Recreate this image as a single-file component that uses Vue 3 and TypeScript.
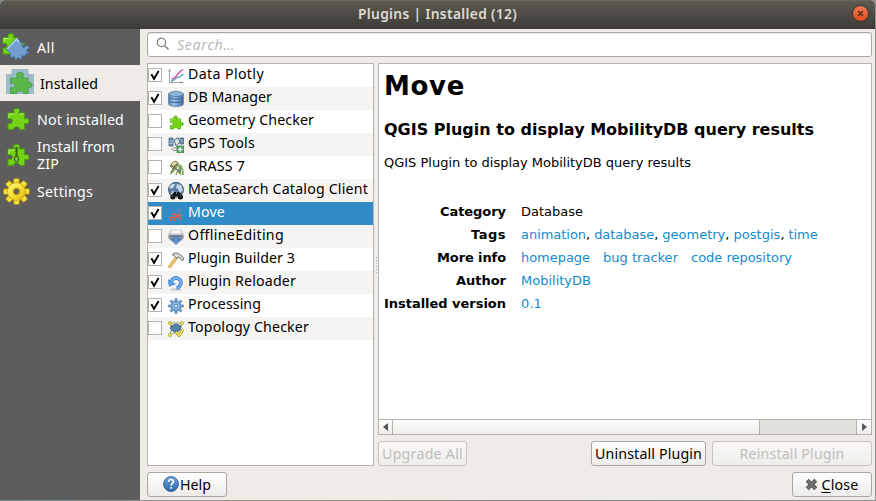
<script setup lang="ts">
interface NavItem { label: string; icon: string; widths: number[]; active?: boolean }
interface Plugin { name: string; icon: string; width: number; checked: boolean; selected?: boolean }
interface Detail { label: string; width: number; values: { text: string; width: number; link?: boolean; after?: string }[] }

const nav: NavItem[] = [
  { label: 'All', icon: 'all', widths: [18] },
  { label: 'Installed', icon: 'installed', widths: [58], active: true },
  { label: 'Not installed', icon: 'puzzle', widths: [87] },
  { label: 'Install from|ZIP', icon: 'zip', widths: [78, 22] },
  { label: 'Settings', icon: 'settings', widths: [56] },
]

const plugins: Plugin[] = [
  { name: 'Data Plotly', icon: 'chart', width: 76, checked: true },
  { name: 'DB Manager', icon: 'db', width: 84, checked: true },
  { name: 'Geometry Checker', icon: 'puzzle', width: 126, checked: false },
  { name: 'GPS Tools', icon: 'gps', width: 67, checked: false },
  { name: 'GRASS 7', icon: 'grass', width: 57, checked: false },
  { name: 'MetaSearch Catalog Client', icon: 'globe', width: 180, checked: true },
  { name: 'Move', icon: 'move', width: 37, checked: true, selected: true },
  { name: 'OfflineEditing', icon: 'offline', width: 96, checked: false },
  { name: 'Plugin Builder 3', icon: 'hammer', width: 107, checked: true },
  { name: 'Plugin Reloader', icon: 'reload', width: 108, checked: true },
  { name: 'Processing', icon: 'gear', width: 73, checked: true },
  { name: 'Topology Checker', icon: 'topology', width: 121, checked: false },
]

const details: Detail[] = [
  { label: 'Category', width: 66, values: [{ text: 'Database', width: 62 }] },
  { label: 'Tags', width: 35, values: [
    { text: 'animation', width: 65, link: true, after: ',' },
    { text: 'database', width: 60, link: true, after: ',' },
    { text: 'geometry', width: 63, link: true, after: ',' },
    { text: 'postgis', width: 47, link: true, after: ',' },
    { text: 'time', width: 29, link: true },
  ] },
  { label: 'More info', width: 69, values: [
    { text: 'homepage', width: 69, link: true },
    { text: 'bug tracker', width: 75, link: true },
    { text: 'code repository', width: 101, link: true },
  ] },
  { label: 'Author', width: 50, values: [{ text: 'MobilityDB', width: 70, link: true }] },
  { label: 'Installed version', width: 122, values: [{ text: '0.1', width: 21, link: true }] },
]

// Tracks a label so that it fills the given width in pixels.
const vFit = {
  mounted(el: HTMLElement, binding: { value: number }) {
    const natural = el.getBoundingClientRect().width
    const count = (el.textContent ?? '').length
    if (count > 1) el.style.letterSpacing = `${(binding.value - natural) / count}px`
  },
}

const gearTeeth = [0, 45, 90, 135, 180, 225, 270, 315]
</script>

<template>
  <svg class="defs" aria-hidden="true">
    <defs>
      <linearGradient id="yellow" x1="0" y1="0" x2="1" y2="1">
        <stop offset="0" stop-color="#fff685" /><stop offset=".5" stop-color="#f7e034" /><stop offset="1" stop-color="#dcb010" />
      </linearGradient>
      <linearGradient id="dbBlue" x1="0" x2="1">
        <stop offset="0" stop-color="#5d88b8" /><stop offset=".35" stop-color="#a5c2e0" /><stop offset="1" stop-color="#3f6fa8" />
      </linearGradient>
      <linearGradient id="helpBlue" x1="0" y1="0" x2="0" y2="1">
        <stop offset="0" stop-color="#6fa3d4" /><stop offset="1" stop-color="#2b69a8" />
      </linearGradient>
      <linearGradient id="steel" x1="0" y1="0" x2="0" y2="1">
        <stop offset="0" stop-color="#f1f1f1" /><stop offset="1" stop-color="#8d8d8d" />
      </linearGradient>
      <path id="piece" d="M2 6H8.4C6.6 3 8 1.4 10.6 1.4S14.5 3 12.8 6H18.6V12C21 10.8 23 12 23 14.2S21 17.4 18.6 16.3V22.4H13.5C14 20.7 12.8 19.8 10.8 19.8S7.2 20.8 7.8 22.4H2V16.4C5 17.2 6.4 16 6.4 14S5 11.4 2 12Z" />
      <symbol id="i-puzzle" viewBox="0 0 24 24">
        <use href="#piece" fill="#74d314" stroke="#48a010" stroke-width="1" />
        <path d="M3 11V7H9.3M14 7H17.6" fill="none" stroke="#b4f56f" stroke-width="1" />
      </symbol>
      <symbol id="i-zip" viewBox="0 0 24 24">
        <use href="#piece" fill="#74d314" stroke="#48a010" stroke-width="1" />
        <path d="M3 11V7H8" fill="none" stroke="#b4f56f" />
        <path d="M10.5 4V14" stroke="#345e18" stroke-width="3" stroke-dasharray="1 1" />
        <path d="M10.5 4V14" stroke="#345e18" />
        <rect x="8.6" y="13.5" width="3.8" height="5" rx="1.8" fill="#8fc65a" stroke="#345e18" stroke-width="1.2" />
      </symbol>
      <symbol id="i-installed" viewBox="0 0 28 26">
        <path d="M5.5 0H22.5V5H28V25H0V5H5.5Z" fill="#9dbbc8" />
        <path d="M5.5 5V25M22.5 5V25" stroke="#8cabb9" />
        <path d="M4.5 9H11.5C9.3 5 11 3.3 14 3.3S18.5 5 16.5 9H22V14C24.8 12.8 26.2 14.3 26.2 16.3S24.5 19 22 18V24.5H17.5C18 22.5 16.2 22 14 22S10.5 23 11 24.5H4.5V18.5C7.5 19.2 9 18 9 16.2S7.5 14 4.5 14.5Z" fill="#5cb74a" stroke="#3b9f40" stroke-width=".8" />
      </symbol>
      <symbol id="i-all" viewBox="0 0 28 28">
        <path d="M1 4.5H6.5C5.2 2 6.5.8 9 .8S12.5 2 11.3 4.5H16V10L8 21H1V14.8C4 15.5 5 14.3 5 12.5S3.5 10 1 10.5Z" fill="#74d314" stroke="#48a010" />
        <path d="M2 9V5.5H7.5" fill="none" stroke="#b9f57a" />
        <path d="M18.5 12C18.5 9.7 20 9 21.5 9.8S23 12 22.3 13" fill="#48a900" />
        <path d="M14.7 5L20.8 11.7C19.2 14.5 21.5 16 24.7 11.9L27.4 14.6 24.3 17.6 26.9 20.3C24 20.5 22.6 21 23 23.5L19.7 22.8 19.4 27 16.5 24.6 13.5 26.6 12.4 23.8 8.2 24.4 8.4 20.6 4.3 16Z" fill="#729fcf" stroke="#3f70b0" stroke-width=".9" stroke-linejoin="round" />
        <path d="M5.3 16L14.6 6.2 17 9" fill="none" stroke="#c1ddf9" stroke-width="1.2" />
      </symbol>
      <symbol id="i-settings" viewBox="0 0 26 26">
        <g stroke="#a88308" stroke-width=".8" fill="url(#yellow)">
          <path v-for="a in gearTeeth" :key="a" d="M9.8 6L10.6 .5H15.4L16.2 6Z" :transform="`rotate(${a} 13 13)`" />
          <circle cx="13" cy="13" r="8.4" />
        </g>
        <circle cx="13" cy="13" r="8.3" fill="url(#yellow)" />
        <circle cx="13" cy="13" r="2.8" fill="#5d5d5d" stroke="#b28b06" />
      </symbol>
      <symbol id="i-chart" viewBox="0 0 16 16">
        <path d="M1.5 1V14.5H16M0 3H3M13 13V16M4 13V16" fill="none" stroke="#858585" stroke-width=".7" />
        <path d="M3.5 11C8 10.5 8 7.5 10 6S11 3 15.5 1.5" fill="none" stroke="#d23aa6" stroke-width="1.3" />
        <path d="M3 13C8 12.5 8 9 11 9S12 7 15.5 6.5" fill="none" stroke="#54abb4" stroke-width="1.3" />
      </symbol>
      <symbol id="i-db" viewBox="0 0 16 16">
        <path d="M.7 3V13C.7 16.2 15.3 16.2 15.3 13V3Z" fill="url(#dbBlue)" stroke="#4472a6" stroke-width=".8" />
        <ellipse cx="8" cy="3" rx="7.3" ry="2.5" fill="#90b3d8" stroke="#4472a6" stroke-width=".8" />
        <path d="M1 6.3C2 8.7 14 8.7 15 6.3M1 9.7C2 12.1 14 12.1 15 9.7" fill="none" stroke="#2d5789" stroke-width=".9" />
      </symbol>
      <symbol id="i-gps" viewBox="0 0 16 16">
        <path d="M1 1H5V9H1ZM12 1H15.5V7H12Z" fill="#6d92b7" stroke="#49657f" stroke-width=".8" />
        <path d="M1 4H5M1 6.5H5M12 4H15" stroke="#b9cee0" stroke-width=".7" />
        <path d="M6 3L10 .7 12 5 8 9Z" fill="#dce5e9" stroke="#526b83" />
        <path d="M3 11.5Q6 15 9 13M5 10Q6 12 9 10.5" fill="none" stroke="#888" />
        <rect x="9" y="9" width="6.7" height="6.7" fill="#62a570" stroke="#3a7b49" stroke-width=".7" />
        <path d="M12.3 10.2V14.6M10.1 12.4H14.5" stroke="#fff" stroke-width="1.3" />
      </symbol>
      <symbol id="i-grass" viewBox="0 0 16 16">
        <path d="M2 14Q8 10 10 3M11 14Q13 8 9 2M15 15Q15 8 12 5M8 15Q10 9 14 7" fill="none" stroke="#8daa68" stroke-width="1.8" />
        <path d="M2 6L5 2 8 1 10 4 7 5 5 9Z" fill="#e7dd9b" stroke="#7b8151" stroke-width=".9" />
        <path d="M3 5L12 12M9 4L3 12" stroke="#5f6654" stroke-width="1.2" />
        <path d="M12 7L13 15" stroke="#4a9947" />
      </symbol>
      <symbol id="i-globe" viewBox="0 0 18 18">
        <circle cx="9" cy="7.8" r="7.5" fill="#587da2" stroke="#31485e" stroke-width=".8" />
        <path d="M2 5L5 2 8 2 7 5 4 7ZM10 2L14 3 16 8 13 11 11 7 9 6ZM5 9L8 10 7 13 4 12Z" fill="#c4d7e7" />
        <path d="M5 17V13L7 10H9V12H10V10H12L15 13V17H11V14H8V17Z" fill="#111" />
        <circle cx="5.8" cy="15" r="2.5" fill="#111" /><circle cx="13.5" cy="15" r="2.5" fill="#111" />
        <path d="M4.8 14.2L6 13.6M12.5 14.2L13.8 13.6" stroke="#aaa" stroke-width=".8" />
      </symbol>
      <symbol id="i-move" viewBox="0 0 16 16">
        <path d="M4.5 9L6.5 7.5 8 9 10 8 12 8M1.5 12L4 11 6.5 12 9 10.5 13 12M5 14.2L8 13.5M11 9L12 14M1 14H3" fill="none" stroke="#f4583a" stroke-width="1.6" stroke-dasharray="2.5 .6" />
        <path d="M3 5L6 4M9 5L11 2M12 7L14 1M7 6L10 6M4 2H5" fill="none" stroke="#5484c0" stroke-width="1.1" stroke-dasharray="1.4 1" />
        <path d="M10 5L13 3M12 10L14 9" stroke="#bc7570" />
      </symbol>
      <symbol id="i-offline" viewBox="0 0 16 16">
        <path d="M2.5 1H13.5L15.5 6V9.5L12 12H4L.5 9.5V6Z" fill="url(#steel)" stroke="#b0b0b0" stroke-width=".6" />
        <ellipse cx="8" cy="3" rx="5" ry="1.4" fill="#fafafa" />
        <path d="M1.2 6.2H14.8V8.6H1.2Z" fill="#737b82" />
        <path d="M5.5 7H10.5V10H13.5L8 15.5 2.5 10H5.5Z" fill="#5b8fcd" stroke="#3e6aa0" stroke-width=".7" />
      </symbol>
      <symbol id="i-hammer" viewBox="0 0 16 16">
        <path d="M8.5 5.5L1.8 14.6" stroke="#c08a35" stroke-width="3" stroke-linecap="round" />
        <path d="M8.5 5.5L1.8 14.6" stroke="#f3c767" stroke-width="2" stroke-linecap="round" />
        <path d="M4 2.5Q7 0 10 1.3L14 4 16 7.3 13.8 8.6 12.5 6.5 10 5 8.5 6 6.5 4.2Z" fill="#d7dddd" stroke="#606769" stroke-width=".9" />
      </symbol>
      <symbol id="i-reload" viewBox="0 0 16 16">
        <ellipse cx="8" cy="14.5" rx="6" ry="1.4" fill="#ccd2d8" />
        <path d="M8.5 12.8A4.9 4.9 0 1 0 3.3 6.5" fill="none" stroke="#3c7dcb" stroke-width="3.8" />
        <path d="M8.5 12.8A4.9 4.9 0 1 0 3.3 6.5" fill="none" stroke="#6eadf2" stroke-width="2.6" />
        <path d="M0 4.6L1.3 11.2 7.4 9Z" fill="#5aa0ee" stroke="#3c7dcb" stroke-width=".7" />
      </symbol>
      <symbol id="i-gear" viewBox="0 0 16 16">
        <g fill="#729fcf" stroke="#4478b3" stroke-width=".5">
          <path v-for="a in gearTeeth" :key="a" d="M6.7 4L7 .3H9L9.3 4Z" :transform="`rotate(${a} 8 8)`" />
          <circle cx="8" cy="8" r="4.9" />
        </g>
        <circle cx="8" cy="8" r="3.2" fill="none" stroke="#a0c1e4" />
        <circle cx="8" cy="8" r="1.6" fill="#fff" stroke="#4478b3" stroke-width=".8" />
      </symbol>
      <symbol id="i-topology" viewBox="0 0 16 16">
        <path d="M2 2L14 2 12 9 2 14 4 7Z" fill="none" stroke="#8c9a5e" />
        <path d="M3 5L8 3 13 5 12 9.5 6 11 2.5 8Z" fill="#5580aa" stroke="#34597f" stroke-width=".8" />
        <g fill="#e9e34d" stroke="#a19d25" stroke-width=".6"><circle cx="2" cy="2" r="1.6" /><circle cx="14" cy="2" r="1.6" /><circle cx="2" cy="14" r="1.6" /></g>
        <path d="M8 11L11 14.5 15.5 8" fill="none" stroke="#8d8b21" stroke-width="2.8" />
        <path d="M8 11L11 14.5 15.5 8" fill="none" stroke="#f1e66b" stroke-width="1.6" />
      </symbol>
    </defs>
  </svg>

  <div class="desktop">
    <div class="window">
      <header class="titlebar">
        <span v-fit="159" class="title">Plugins | Installed (12)</span>
        <button class="window-close" aria-label="Close window">
          <svg viewBox="0 0 15 15"><path d="M5 5L10 10M10 5L5 10" stroke="#4b2a1b" stroke-width="1.4" /></svg>
        </button>
      </header>

      <div class="body">
        <nav class="sidebar">
          <a v-for="item in nav" :key="item.icon" class="nav-item" :class="{ active: item.active }">
            <svg class="nav-icon" :class="item.icon"><use :href="`#i-${item.icon}`" /></svg>
            <span class="nav-label">
              <span v-for="(line, i) in item.label.split('|')" :key="line" class="nav-line"><span v-fit="item.widths[i]">{{ line }}</span></span>
            </span>
          </a>
        </nav>

        <main class="content">
          <div class="search">
            <svg class="search-icon" viewBox="0 0 14 14"><circle cx="5.4" cy="5.4" r="4.2" fill="none" stroke="#858585" stroke-width="1.3" /><path d="M8.5 8.5L12.5 12.5" stroke="#858585" stroke-width="1.6" /></svg>
            <span v-fit="58" class="placeholder">Search…</span>
          </div>

          <div class="panes">
            <ul class="plugins">
              <li v-for="p in plugins" :key="p.name" class="plugin" :class="{ selected: p.selected }">
                <span class="checkbox">
                  <svg v-if="p.checked" viewBox="0 0 12 12"><path d="M2.4 5.2L5 9.8 9.6 2" fill="none" stroke="#000" stroke-width="1.9" /></svg>
                </span>
                <svg class="plugin-icon" :class="p.icon"><use :href="`#i-${p.icon}`" /></svg>
                <span v-fit="p.width" class="plugin-name">{{ p.name }}</span>
              </li>
            </ul>

            <div class="splitter"><i v-for="n in 6" :key="n" /></div>

            <div class="right">
              <section class="viewer">
                <div class="document">
                  <h1><span v-fit="81">Move</span></h1>
                  <h3><span v-fit="430">QGIS Plugin to display MobilityDB query results</span></h3>
                  <p><span v-fit="307">QGIS Plugin to display MobilityDB query results</span></p>
                  <dl class="details">
                    <template v-for="d in details" :key="d.label">
                      <dt><span v-fit="d.width">{{ d.label }}</span></dt>
                      <dd :class="{ spaced: d.label === 'More info' }">
                        <span v-for="v in d.values" :key="v.text"><span v-fit="v.width" :class="{ link: v.link }">{{ v.text }}</span>{{ v.after }}</span>
                      </dd>
                    </template>
                  </dl>
                </div>
                <div class="scrollbar">
                  <span class="arrow"><svg viewBox="0 0 6 8"><path d="M5 0V8L0 4Z" /></svg></span>
                  <span class="thumb" />
                  <span class="track" />
                  <span class="arrow next"><svg viewBox="0 0 6 8"><path d="M1 0V8L6 4Z" /></svg></span>
                </div>
              </section>
              <div class="actions">
                <button class="btn upgrade" disabled><span v-fit="81">Upgrade All</span></button>
                <button class="btn uninstall"><span v-fit="107">Uninstall Plugin</span></button>
                <button class="btn reinstall" disabled><span v-fit="105">Reinstall Plugin</span></button>
              </div>
            </div>
          </div>

          <footer class="footer">
            <button class="btn small">
              <svg class="help-icon" viewBox="0 0 16 16"><circle cx="8" cy="8" r="7.5" fill="url(#helpBlue)" stroke="#235a94" stroke-width=".8" /><path d="M5.6 5.7C5.8 2.6 10.7 2.9 10.4 5.8 10.2 7.5 8.1 7.5 8.1 9.8M8.1 11V12.8" fill="none" stroke="#fff" stroke-width="1.6" /></svg>
              <span v-fit="31">Help</span>
            </button>
            <button class="btn small close">
              <svg class="close-icon" viewBox="0 0 13 13"><path d="M2.2 2.2L10.8 10.8M10.8 2.2L2.2 10.8" stroke="#555" stroke-width="4.2" /><path d="M2.5 2.5L10.5 10.5M10.5 2.5L2.5 10.5" stroke="#747474" stroke-width="2" /></svg>
              <span v-fit="37"><u>C</u>lose</span>
            </button>
          </footer>
        </main>
      </div>
    </div>
  </div>
</template>

<style>
body { overflow: hidden; }
</style>

<style scoped>
* { box-sizing: border-box; }
.defs { position: absolute; width: 0; height: 0; }
.desktop { width: 876px; height: 501px; padding: 0 1px 1px 0; background: linear-gradient(90deg, #788e91, #9b948b 30%, #87867f 60%, #8f9390); font: 14.2px/23px "Noto Sans", "Open Sans", sans-serif; color: #000; white-space: nowrap; }
.window { display: flex; flex-direction: column; height: 500px; background: #efebe7; border-radius: 5px 5px 0 0; overflow: hidden; }
.titlebar { display: flex; flex: none; height: 29px; align-items: center; justify-content: center; position: relative; background: linear-gradient(#5d5a52, #3c3b37); border-top: 1px solid #6b675e; color: #dfdbd2; }
.title { margin-top: -2px; font-size: 13.8px; font-weight: 600; line-height: 26px; }
.window-close { position: absolute; right: 6px; top: 4px; width: 17px; height: 17px; padding: 0; border: 1px solid #33312d; border-radius: 50%; background: linear-gradient(#f37b56, #df4b1c); }
.window-close svg { display: block; width: 15px; height: 15px; }
.body { display: flex; flex: 1; min-height: 0; }
.sidebar { width: 140px; flex: none; background: #5d5d5d; }
.nav-item { display: flex; height: 36px; align-items: center; color: #fff; }
.nav-item.active { background: #efebe7; color: #000; }
.nav-icon { flex: none; width: 24px; height: 24px; margin: 0 7px 0 6px; }
.nav-icon.all { width: 28px; height: 28px; margin: 0 7px 0 2px; }
.nav-icon.installed { width: 28px; height: 26px; margin: -2px 6px 0 6px; }
.nav-icon.settings { width: 27px; height: 27px; margin: 0 7px 0 3px; }
.nav-line { display: block; line-height: 17px; }
.content { display: flex; flex: 1; flex-direction: column; padding: 3px 3px 3px 7px; min-width: 0; }
.search { display: flex; flex: none; height: 25px; align-items: center; gap: 7px; padding-left: 8px; border: 1px solid #aaa6a1; border-radius: 3px; background: #fff; box-shadow: inset 0 1px #ededed; }
.search-icon { width: 14px; height: 14px; margin-top: -1px; }
.placeholder { font-style: italic; color: #b8b8b8; }
.panes { display: flex; height: 403px; margin-top: 6px; }
.plugins { width: 227px; margin: 0; padding: 0; list-style: none; background: #fff; border: 1px solid #b5b1ad; }
.plugin { display: flex; height: 23px; align-items: center; }
.plugin-name { line-height: 19px; margin-bottom: 4px; }
.plugin:nth-child(even) { background: #f5f4f2; }
.plugin.selected { background: #308cc6; color: #fff; }
.checkbox { width: 14px; height: 14px; flex: none; margin-bottom: 1px; border: 1px solid #b5b3af; background: #fff; }
.checkbox svg { display: block; width: 12px; height: 12px; }
.plugin-icon { width: 16px; height: 16px; flex: none; margin: 1px 4px 0 6px; }
.plugin-icon.puzzle { width: 15px; height: 15px; margin-left: 7px; }
.plugin-icon.globe { width: 18px; height: 18px; margin: 1px 3px 0 5px; }
.splitter { display: flex; flex-direction: column; justify-content: center; align-items: center; gap: 2px; width: 4px; }
.splitter i { width: 1px; height: 1px; background: #aaa6a1; }
.right { display: flex; flex: 1; flex-direction: column; min-width: 0; gap: 6px; }
.viewer { display: flex; flex-direction: column; height: 372px; background: #fff; border: 1px solid #b5b1ad; }
.document { flex: 1; padding: 5px 5px 0; font: 13px/16px "DejaVu Sans", sans-serif; }
h1 { margin: 0; font-size: 26px; line-height: 34px; }
h3 { margin: 17px 0 0; font-size: 16px; line-height: 19px; }
p { margin: 16px 0 0; line-height: 16px; }
.details { display: grid; grid-template-columns: 122px 1fr; column-gap: 15px; margin: 29px 0 0; }
dt { line-height: 23px; font-weight: bold; text-align: right; }
dd { display: flex; gap: 4px; margin: 0; line-height: 23px; }
dd.spaced { gap: 13px; }
.link { color: #148acb; }
.scrollbar { display: flex; height: 15px; border-top: 1px solid #b5b1ad; background: linear-gradient(#fdfdfc, #efedeb); }
.arrow { display: flex; width: 14px; align-items: center; justify-content: center; border-right: 1px solid #b5b1ad; }
.arrow svg { width: 6px; height: 8px; fill: #555; }
.arrow.next { border: 0; }
.thumb { width: 367px; border-right: 1px solid #b5b1ad; }
.track { flex: 1; background: #e3e2df; border-right: 1px solid #b5b1ad; }
.actions { display: flex; gap: 6px; }
.btn { display: flex; height: 25px; align-items: center; justify-content: center; padding: 0; border: 1px solid #aaa6a1; border-radius: 3px; background: linear-gradient(#fefefe, #eeecea); color: #000; font: inherit; }
.btn:disabled { border-color: #c6c2be; background: linear-gradient(#faf9f8, #efedea); color: #bebebe; }
.upgrade { width: 89px; }
.uninstall { width: 115px; margin-left: auto; }
.reinstall { width: 160px; }
.footer { display: flex; justify-content: space-between; margin-top: 6px; }
.small { width: 80px; }
.help-icon { width: 16px; height: 16px; margin: -1px 1px 0 0; }
.close { gap: 3px; }
.close-icon { width: 13px; height: 13px; }
u { text-underline-offset: 2px; }
</style>
